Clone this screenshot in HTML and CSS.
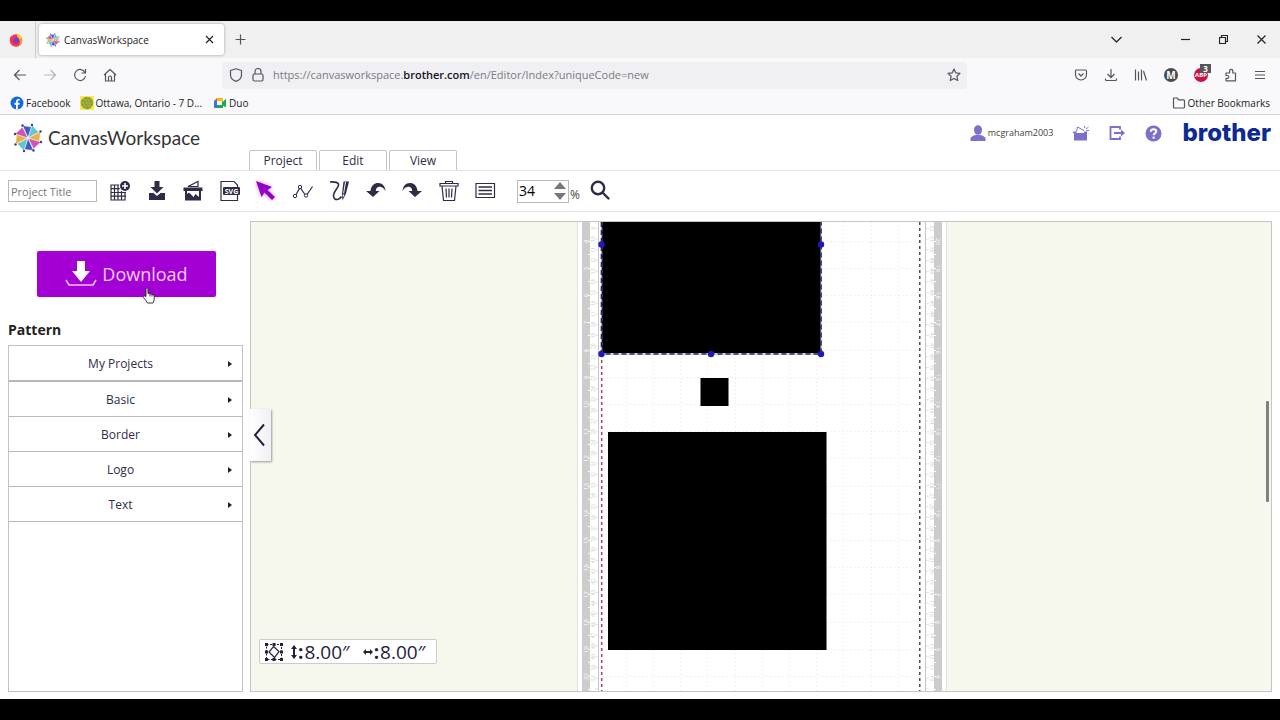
FILE: index.html
```html
<!DOCTYPE html>
<html lang="en">
<head>
    <meta charset="UTF-8">
    <meta name="viewport" content="width=device-width, initial-scale=1.0">
    <title>CanvasWorkspace</title>
    <link rel="stylesheet" href="styles.css">
</head>
<body>
    <!-- shared shapes -->
    <svg class="defs" aria-hidden="true">
        <defs>
            <symbol id="pinwheel" viewBox="-15 -15 30 30">
                <g stroke="#fff" stroke-width=".6">
                    <path fill="#3f5bc9" d="M0 0-5.500-12.500 4-11z"/>
                    <path fill="#62c6d9" d="M0 0 4-13 11-5.500z"/>
                    <path fill="#eab04a" d="M0 0 12.500-6.500 11.500 4z"/>
                    <path fill="#c957b4" d="M0 0 13 4 5.500 11z"/>
                    <path fill="#3f5bc9" d="M0 0 5.500 12.500-4 11.500z"/>
                    <path fill="#62c6c9" d="M0 0-4 13-11 5.500z"/>
                    <path fill="#eab04a" d="M0 0-12.500 6.500-11.500-4z"/>
                    <path fill="#c957b4" d="M0 0-13-4-5.500-11z"/>
                </g>
                <g fill="#3b3f8a">
                    <circle cx="-5.500" cy="-12.500" r="1.200"/><circle cx="4" cy="-13" r="1.200"/><circle cx="12.500" cy="-6.500" r="1.200"/><circle cx="13" cy="4" r="1.200"/>
                    <circle cx="5.500" cy="12.500" r="1.200"/><circle cx="-4" cy="13" r="1.200"/><circle cx="-12.500" cy="6.500" r="1.200"/><circle cx="-13" cy="-4" r="1.200"/>
                </g>
            </symbol>
        </defs>
    </svg>

    <div class="window">
        <div class="tabbar">
            <span class="fox">
                <svg width="14" height="14" viewBox="0 0 14 14"><circle cx="7" cy="7.500" r="6.200" fill="#f5364f"/><path fill="#ff9a1f" d="M8 .6c3.500 1.300 5.400 4 5.200 7.500-.2 2.500-1.800 4.500-4 5.300 1.800-2 2.300-4.500 1.300-6.600C9.800 5 8 4 8 .6z"/><path fill="#ffd23a" d="M8 .6c2.400 1 4 2.700 4.700 4.800L10.500 6C8.600 4.800 7.700 2.700 8 .6z"/><circle cx="7" cy="7.500" r="3" fill="#7a3bd0"/><path fill="#f5364f" d="M1 4.500 3 3l3 1.500L4.500 7H1z"/></svg>
            </span>
            <div class="tab">
                <svg width="14" height="14"><use href="#pinwheel"/></svg>
                <span class="tab-title">CanvasWorkspace</span>
                <button class="icon-btn" aria-label="Close tab"><svg width="9" height="9" viewBox="0 0 9 9"><path d="M1 1l7 7M8 1 1 8"/></svg></button>
            </div>
            <button class="icon-btn new-tab" aria-label="New tab"><svg width="11" height="11" viewBox="0 0 11 11"><path d="M5.500.5v10M.5 5.500h10"/></svg></button>
            <div class="win-buttons">
                <button class="icon-btn list-tabs" aria-label="List tabs"><svg width="11" height="7" viewBox="0 0 11 7"><path d="M.5 1l5 5 5-5"/></svg></button>
                <button class="icon-btn" aria-label="Minimize"><svg width="9" height="9" viewBox="0 0 9 9"><path d="M0 4.500h9"/></svg></button>
                <button class="icon-btn" aria-label="Restore"><svg width="9" height="9" viewBox="0 0 9 9"><path d="M.5 2.500h6v6h-6zM2.500 2.500v-2h6v6h-2"/></svg></button>
                <button class="icon-btn" aria-label="Close"><svg width="9" height="9" viewBox="0 0 9 9"><path d="M.5.5l8 8M8.500.5l-8 8"/></svg></button>
            </div>
        </div>

        <div class="navbar">
            <div class="nav-left">
                <button class="icon-btn" aria-label="Back"><svg width="14" height="14" viewBox="0 0 14 14"><path d="M13 7H1.500M6.500 2l-5 5 5 5"/></svg></button>
                <button class="icon-btn off" aria-label="Forward"><svg width="14" height="14" viewBox="0 0 14 14"><path d="M1 7h11.500M7.500 2l5 5-5 5"/></svg></button>
                <button class="icon-btn" aria-label="Reload"><svg width="14" height="14" viewBox="0 0 14 14"><path d="M12 4.500A5.500 5.500 0 1 0 12.500 8M12.500 1v4h-4"/></svg></button>
                <button class="icon-btn" aria-label="Home"><svg width="14" height="14" viewBox="0 0 14 14"><path d="M1 7l6-5.500L13 7M2.500 6v7h9V6M5.500 13V9.500q0-1.500 1.500-1.500t1.500 1.500V13"/></svg></button>
            </div>
            <div class="urlbar">
                <svg width="14" height="14" viewBox="0 0 14 14"><path d="M7 .8l5.500 1.700v4C12.500 10 9.800 12.500 7 13.300 4.200 12.500 1.500 10 1.500 6.500v-4z"/></svg>
                <svg width="12" height="14" viewBox="0 0 12 14"><rect x="1" y="6" width="10" height="7" rx="1.500"/><path d="M3 6V3.500a3 3 0 0 1 6 0V6"/></svg>
                <div class="url" role="textbox" aria-label="Address" contenteditable="true" spellcheck="false">https://canvasworkspace.<b>brother.com</b>/en/Editor/Index?uniqueCode=new</div>
                <button class="icon-btn" aria-label="Bookmark this page"><svg width="14" height="14" viewBox="0 0 14 14"><path d="M7 1l1.800 3.900 4.200.5-3.100 2.900.8 4.200L7 10.400l-3.700 2.100.8-4.200L1 5.400l4.200-.5z"/></svg></button>
            </div>
            <div class="nav-right">
                <button class="icon-btn" aria-label="Pocket"><svg width="14" height="14" viewBox="0 0 14 14"><path d="M2.500 2h9q1 0 1 1v3.500a5.500 5.500 0 0 1-11 0V3q0-1 1-1zM4.500 5.500 7 8l2.500-2.500"/></svg></button>
                <button class="icon-btn" aria-label="Downloads"><svg width="14" height="14" viewBox="0 0 14 14"><path d="M7 1v8.500M3.500 6 7 9.500 10.500 6M1.500 10.500v1q0 1 1 1h9q1 0 1-1v-1"/></svg></button>
                <button class="icon-btn" aria-label="Library"><svg width="14" height="14" viewBox="0 0 14 14"><path d="M1.500 1.500v11M4.500 3.500v9M7.500 1.500v11M9.500 3l3 9.500"/></svg></button>
                <button class="icon-btn" aria-label="Account"><span class="avatar">M</span></button>
                <button class="icon-btn abp-btn" aria-label="Adblock Plus"><span class="abp">ABP</span><span class="badge">3</span></button>
                <button class="icon-btn" aria-label="Extensions"><svg width="14" height="14" viewBox="0 0 14 14"><path d="M2 12.800h9.500V5H8.800V3a1.600 1.600 0 0 0-3.200 0v2H2v2.500h1.500a1.400 1.400 0 0 1 0 2.800H2z"/></svg></button>
                <button class="icon-btn" aria-label="Menu"><svg width="12" height="12" viewBox="0 0 12 12"><path d="M1 2.500h10M1 6h10M1 9.500h10"/></svg></button>
            </div>
        </div>

        <div class="bookmarks">
            <a href="#"><svg width="14" height="14" viewBox="0 0 14 14"><circle cx="7" cy="7" r="6.500" fill="#1068e0"/><path fill="#fff" d="M6 13.500V8.700H4.300V6.800H6V5.500C6 3.700 7 2.900 8.500 2.900h1.200v1.700h-.9c-.8 0-1 .4-1 1.100v1.100h1.900l-.3 1.900H7.800v4.800z"/></svg>Facebook</a>
            <a href="#"><svg width="14" height="14" viewBox="0 0 14 14"><path fill="#f2ea59" d="M0 0h14v14H0z"/><circle cx="7" cy="7" r="6.200" fill="#8c9c2c"/><path stroke="#b4bc4c" stroke-width=".6" fill="none" d="M2 4h10M1 7h12M2 10h10M4 2l6 10M7 1l4 9M2 5l4 8"/></svg>Ottawa, Ontario - 7 D...</a>
            <a href="#" class="duo"><svg width="14" height="14" viewBox="0 0 14 14"><path fill="#2979ee" d="M1 5h3v4H1z"/><path fill="#e8453c" d="M1 5l3-3v3z"/><path fill="#fbbc04" d="M4 2h6v3H4z"/><path fill="#2979ee" d="M1 9h3v3H2q-1 0-1-1z"/><path fill="#1fa854" d="M4 9h5V7l4-4.500v9L10 9.500V12H4zM9 5h1v4H9z"/></svg>Duo</a>
            <a href="#" class="other"><svg width="14" height="14" viewBox="0 0 14 14" class="line"><path d="M1.500 2h3.700l1.500 1.800h4.800q1 0 1 1V11q0 1-1 1h-9q-1 0-1-1z"/></svg>Other Bookmarks</a>
        </div>

        <header class="header">
            <a href="#" class="brand">
                <svg width="30" height="30"><use href="#pinwheel"/></svg>
                <span>CanvasWorkspace</span>
            </a>
            <nav class="menu">
                <button>Project</button>
                <button>Edit</button>
                <button>View</button>
            </nav>
            <div class="account">
                <a href="#" class="user"><svg width="16" height="16" viewBox="0 0 16 16"><ellipse cx="8" cy="5" rx="4" ry="4.800"/><path d="M.5 16v-2.500Q1 11 6 10h4q5 1 5.500 3.500V16z"/></svg>mcgraham2003</a>
                <a href="#" aria-label="News"><svg width="16" height="16" viewBox="0 0 16 16"><path d="M1 8h13v7.500H1zM0 6.500h3.500V8H0zM11 6.500h3V8h-3z"/><path fill="none" stroke="#7c70cb" d="M3.500 6.500 4.500 2l6.500 3.500M11.500 3l.5-2M13 4l2.500-2M13.500 5.500H16"/></svg></a>
                <a href="#" aria-label="Log out"><svg width="16" height="16" viewBox="0 0 16 16"><path fill="none" stroke="#7c70cb" stroke-width="1.800" d="M11 4.500V2H1.500v12H11v-2.500M5 8h9"/><path d="M12 4.500 16 8l-4 3.500z"/></svg></a>
                <a href="#" aria-label="Help"><svg width="17" height="17" viewBox="0 0 17 17"><circle cx="8.500" cy="8.500" r="8"/><path fill="none" stroke="#fff" stroke-width="2" d="M5.800 6.800q0-2.600 2.700-2.600t2.700 2.200c0 1.700-2.500 1.800-2.500 3.800"/><circle cx="8.700" cy="12.600" r="1.200" fill="#fff"/></svg></a>
                <span class="brother">brother</span>
            </div>
        </header>

        <div class="toolbar">
            <input class="title-input" type="text" placeholder="Project Title" aria-label="Project Title">
            <div class="tools">
                <button aria-label="New"><svg width="24" height="24" viewBox="0 0 24 24"><path class="s" d="M3 6h14v15H3zM3 9.700h15M3 13.500h15M3 17.200h15M6.500 6v15M10 6v15M13.500 6v15"/><circle cx="17" cy="7" r="6" fill="#fff"/><circle cx="17" cy="7" r="5"/><path stroke="#fff" stroke-width="1.600" d="M17 4v6M14 7h6"/></svg></button>
                <button aria-label="Save"><svg width="24" height="24" viewBox="0 0 24 24"><path d="M9.500 2h5v6h4L12 14.500 5.500 8h4zM4 14h4.500l3.500 3 3.500-3H20v7H4z"/></svg></button>
                <button aria-label="Image"><svg width="24" height="24" viewBox="0 0 24 24"><path d="M2.500 8.500h19V12H20v9.500H4V12H2.500z"/><path fill="#fff" d="M6 12h12v6l-3.500-3-2 3L8 13.500 6 15z"/><path class="s" d="M7 7.500l10-5v5z"/></svg></button>
                <button aria-label="SVG"><svg width="24" height="24" viewBox="0 0 24 24"><path class="s" d="M3 2.500h13l3.500 3.500v15.500H3z"/><rect x="5" y="8" width="17" height="8" rx="1"/><text x="13.500" y="14.500">SVG</text></svg></button>
                <button aria-label="Select" class="active"><svg width="24" height="24" viewBox="0 0 24 24"><path d="M2 2l16 6-4.500 3 7.500 7-3 3-7.500-7.500-3 4.500z"/></svg></button>
                <button aria-label="Edit points"><svg width="24" height="24" viewBox="0 0 24 24"><path class="s" d="M4 17.500 9 8.500l6 8.500 6.500-9.500"/><g fill="#fff" stroke="#2d2d48"><circle cx="4" cy="17" r="1.700"/><circle cx="9" cy="8" r="1.700"/><circle cx="15" cy="16.500" r="1.700"/></g></svg></button>
                <button aria-label="Draw"><svg width="24" height="24" viewBox="0 0 24 24"><path class="s w" d="M3 3q7-.5 8.500 2C12.500 8 6 12.500 6.500 17q.5 4 4 3.500 2.500-.3 4-3"/><path d="M16.500 2.500h5.500l-3 12-3.500 7-.5-7z"/><path fill="#fff" d="M18 3h1l-2 11.500-.8-.3zM15.800 15.500h1.700l-1.500 3z"/></svg></button>
                <button aria-label="Undo"><svg width="24" height="24" viewBox="0 0 24 24"><path d="M2 12h4.500C7 6.500 10.500 4 14 4c4.500 0 7 3 7.500 8-2-3.500-4-4.500-6.500-4.300-2 .2-3 1.600-3.200 4.300h3.700l-6.500 6z"/></svg></button>
                <button aria-label="Redo"><svg width="24" height="24" viewBox="0 0 24 24"><path d="M22 12h-4.500C17 6.500 13.500 4 10 4c-4.500 0-7 3-7.500 8 2-3.500 4-4.500 6.500-4.300 2 .2 3 1.600 3.200 4.300H8.500l6.500 6z"/></svg></button>
                <button aria-label="Delete"><svg width="24" height="24" viewBox="0 0 24 24"><path class="s" d="M3 4.500h18v2.500H3zM8.500 4.500v-2h7v2M5 7l1.500 14.500h11L19 7M9 9.500l.5 9M12 9.500v9M15 9.500l-.5 9"/></svg></button>
                <button aria-label="Properties"><svg width="24" height="24" viewBox="0 0 24 24"><path class="s" d="M3 4.500h18.500v14H3z"/><path class="s w" d="M5.500 8h13.500M5.500 11.500h13.500M5.500 15h13.500"/></svg></button>
            </div>
            <div class="zoom">
                <div class="zoom-box">
                    <input id="zoom" type="number" value="34">
                    <div class="steps">
                        <button aria-label="Zoom in"><svg width="12" height="7" viewBox="0 0 12 7"><path d="M6 0l6 7H0z"/></svg></button>
                        <button aria-label="Zoom out"><svg width="12" height="7" viewBox="0 0 12 7"><path d="M0 0h12L6 7z"/></svg></button>
                    </div>
                </div>
                <label for="zoom">%</label>
            </div>
            <button class="search" aria-label="Zoom"><svg width="22" height="22" viewBox="0 0 22 22"><circle cx="9" cy="8" r="6.200"/><path d="M13.500 12.500l6 6"/></svg></button>
        </div>

        <main class="main">
            <aside class="side">
                <button class="download">
                    <svg width="32" height="28" viewBox="0 0 32 28"><path fill="#fff" d="M12 1h8v10h5l-9 11-9-11h5z"/><path fill="none" stroke="#f3c0ff" stroke-width="1.600" d="M1 20l3 5h24l3-5"/></svg>
                    <span>Download</span>
                    <svg class="hand" width="14" height="17" viewBox="0 0 14 17"><path fill="#fff" stroke="#222" stroke-width=".9" d="M4 9.500V2q0-1.200 1-1.200T6 2v4.500q1.700-.7 2 .5 1.500-.6 2 .5 2.200-.4 2.200 1.500v3q0 2-1.200 4H5.500Q4 13.500 1.500 10.500q-.8-1.200.4-1.600Q3 8.700 4 9.500zM8 7v2.500M10 7.500v2"/></svg>
                </button>
                <h2>Pattern</h2>
                <div class="patterns">
                    <button><span>My Projects</span><i></i></button>
                    <button><span>Basic</span><i></i></button>
                    <button><span>Border</span><i></i></button>
                    <button><span>Logo</span><i></i></button>
                    <button><span>Text</span><i></i></button>
                </div>
            </aside>

            <section class="canvas">
                <svg class="mat" id="mat" width="372">
                    <rect x="2" width="370" height="100%" fill="#fff"/>
                    <rect x="2" width="1" height="100%" fill="#e0e2d8"/>
                    <rect x="7" width="8" height="100%" fill="#ccc"/>
                    <rect x="359" width="8" height="100%" fill="#ccc"/>
                    <rect x="371" width="1" height="100%" fill="#e0e2d8"/>
                    <rect x="23" width="1" height="100%" fill="#c4c4c4"/>
                    <rect x="350" width="1" height="100%" fill="#c4c4c4"/>
                    <g id="grid"></g>
                    <path stroke="#333" stroke-width="1.300" stroke-dasharray="3 3" d="M344.800 0v1200"/>
                    <rect x="27" y="-90" width="219" height="221"/>
                    <rect x="125.500" y="156" width="28" height="28"/>
                    <rect x="33" y="210" width="218.500" height="218"/>
                    <path stroke="#b04055" stroke-width="1.500" stroke-dasharray="3 3" d="M26.700 0v1200"/>
                    <path class="sel-back" d="M26.500 0v132h219.500V0"/>
                    <path class="sel" d="M26.500 0v132h219.500V0"/>
                    <g fill="#2317b5">
                        <circle cx="26.500" cy="22.500" r="3.200"/><circle cx="246" cy="22.500" r="3.200"/>
                        <circle cx="26.500" cy="132" r="3.200"/><circle cx="136" cy="132" r="3.200"/><circle cx="246" cy="132" r="3.200"/>
                    </g>
                </svg>
                <button class="collapse" aria-label="Hide panel"><svg width="12" height="24" viewBox="0 0 12 24"><path d="M11 1.500 2 12l9 10.500"/></svg></button>
                <div class="size">
                    <svg width="20" height="20" viewBox="0 0 20 20"><path fill="none" stroke="#22223a" stroke-dasharray="2 1.500" d="M2.500 2.500h15v15h-15z"/><path fill="#fff" stroke="#22223a" stroke-width="1.200" d="M9.500 4.500l5.500 5-4.500 6L5 10z"/><path d="M1 1h3v3H1zM8.500 1h3v3h-3zM16 1h3v3h-3zM1 8.500h3v3H1zM16 8.500h3v3h-3zM1 16h3v3H1zM8.500 16h3v3h-3zM16 16h3v3h-3z"/></svg>
                    <span><svg width="6" height="14" viewBox="0 0 6 14"><path d="M3 0l3 4H4v6h2l-3 4-3-4h2V4H0z"/></svg><b>:</b>8.00″</span>
                    <span><svg width="10" height="6" viewBox="0 0 10 6"><path d="M0 3l3-3v2h4V0l3 3-3 3V4H3v2z"/></svg><b>:</b>8.00″</span>
                </div>
                <div class="scroll"></div>
            </section>
        </main>
    </div>

    <script src="mat.js"></script>
</body>
</html>
```
FILE: styles.css
```css
* {
    box-sizing: border-box;
    margin: 0;
    padding: 0;
}
body {
    min-height: 100vh;
    padding: 21px 0;
    display: flex;
    background-color: #000;
    font: 12px/16px "Open Sans", "Noto Sans", sans-serif;
    color: #222;
}
button, input {
    font: inherit;
    color: inherit;
    border: none;
    background: none;
}
a {
    color: inherit;
    text-decoration: none;
}
svg {
    flex: none;
}
.defs {
    position: absolute;
    width: 0;
    height: 0;
}
.window {
    flex: 1;
    min-width: 0;
    display: flex;
    flex-direction: column;
    background-color: #fff;
}

/* browser */
.icon-btn {
    display: flex;
    align-items: center;
    justify-content: center;
}
.icon-btn svg, .urlbar svg, .line {
    fill: none;
    stroke: #55555e;
    stroke-width: 1.2;
    stroke-linejoin: round;
}
.tabbar {
    height: 37px;
    display: flex;
    align-items: center;
    background-color: #f0f0f0;
}
.fox {
    width: 36px;
    height: 37px;
    padding-left: 9px;
    display: flex;
    align-items: center;
    border-right: 1px solid #ccc;
}
.tab {
    width: 185px;
    height: 31px;
    margin-left: 3px;
    padding: 0 10px 0 7px;
    display: flex;
    align-items: center;
    gap: 4px;
    border-radius: 3px;
    background-color: #fff;
    box-shadow: 0 0 3px #999;
    font-size: 10px;
}
.tab-title {
    flex: 1;
}
.tab .icon-btn svg, .win-buttons .icon-btn svg {
    stroke: #222;
}
.new-tab {
    margin-left: 11px;
}
.win-buttons {
    margin-left: auto;
    padding-right: 14px;
    display: flex;
    gap: 29px;
}
.win-buttons .list-tabs {
    margin-right: 30px;
}
.navbar {
    height: 34px;
    display: flex;
    align-items: center;
    background-color: #f9f9fb;
}
.nav-left {
    width: 222px;
    padding-left: 13px;
    display: flex;
    gap: 16px;
}
.off {
    opacity: .4;
}
.urlbar {
    flex: 1;
    max-width: 745px;
    height: 27px;
    padding: 0 6px 0 7px;
    display: flex;
    align-items: center;
    gap: 9px;
    border-radius: 3px;
    background-color: #f0f0f4;
}
.url {
    flex: 1;
    white-space: nowrap;
    overflow: hidden;
    font-size: 11px;
    color: #7a7a82;
}
.url b {
    font-weight: 600;
    color: #15141a;
}
.nav-right {
    margin-left: auto;
    padding-right: 14px;
    display: flex;
    align-items: center;
    gap: 16px;
}
.avatar, .abp {
    width: 14px;
    height: 14px;
    border-radius: 50%;
    background-color: #4a4a50;
    color: #fff;
    font: bold 10px/14px "Open Sans", sans-serif;
    text-align: center;
}
.abp {
    background-color: #d1103f;
    font-size: 6px;
}
.abp-btn {
    position: relative;
}
.badge {
    position: absolute;
    top: -4px;
    right: -3px;
    width: 11px;
    height: 9px;
    background-color: #55555a;
    color: #fff;
    font: bold 8px/9px "Open Sans", sans-serif;
}
.bookmarks {
    height: 23px;
    padding: 0 10px;
    display: flex;
    align-items: center;
    gap: 9px;
    border-bottom: 1px solid #d0d0d8;
    background-color: #f9f9fb;
    font-size: 10px;
}
.bookmarks a {
    display: flex;
    align-items: center;
    gap: 2px;
}
.bookmarks .duo {
    margin-left: 2px;
}
.bookmarks .other {
    margin-left: auto;
}

/* app header */
.header {
    height: 56px;
    display: flex;
    border-bottom: 1px solid #e2e2e6;
}
.brand {
    width: 249px;
    height: 46px;
    padding-left: 13px;
    display: flex;
    align-items: center;
    gap: 5px;
    font: 19px/24px Lato, sans-serif;
    color: #333;
}
.menu {
    display: flex;
    align-items: flex-end;
    gap: 2px;
}
.menu button {
    width: 68px;
    height: 20px;
    border: 1px solid #c4c4c8;
    border-bottom: none;
    border-radius: 2px 2px 0 0;
    color: #2d2d48;
}
.account {
    height: 36px;
    margin-left: auto;
    padding-right: 9px;
    display: flex;
    align-items: center;
    gap: 20px;
    fill: #7c70cb;
}
.account a {
    display: flex;
}
.account .user {
    align-items: center;
    gap: 2px;
    font-size: 9px;
    color: #444;
}
.brother {
    font: 800 24px/30px Inter, sans-serif;
    color: #0d2a92;
}

/* tools */
.toolbar {
    height: 41px;
    padding-left: 8px;
    display: flex;
    align-items: center;
    border-bottom: 1px solid #e2e2e6;
}
.title-input {
    width: 89px;
    height: 22px;
    padding-left: 2px;
    border: 1px solid #b8b8b8;
    font-size: 11px;
}
.title-input::placeholder {
    color: #777;
}
.tools {
    width: 389px;
    margin-left: 11px;
    display: flex;
    justify-content: space-between;
}
.tools button {
    width: 24px;
    height: 24px;
    fill: #2d2d48;
}
.tools .s {
    fill: none;
    stroke: #2d2d48;
    stroke-width: 1.2;
}
.tools .w {
    stroke-width: 1.6;
}
.tools text {
    font: bold 7px "Open Sans", sans-serif;
    fill: #fff;
    text-anchor: middle;
}
.tools .active {
    fill: #9400c8;
    filter: drop-shadow(0 0 2px #d58cf0);
}
.zoom {
    margin-left: 20px;
    display: flex;
    align-items: flex-end;
    gap: 1px;
    color: #444;
}
.zoom label {
    height: 16px;
}
.zoom-box {
    width: 52px;
    height: 23px;
    padding-right: 2px;
    display: flex;
    align-items: center;
    border: 1px solid #b8b8b8;
}
.zoom-box input {
    flex: 1;
    min-width: 0;
    padding-left: 1px;
    appearance: textfield;
    font-size: 14px;
    color: #000;
}
.zoom-box input::-webkit-inner-spin-button {
    display: none;
}
.steps {
    display: flex;
    flex-direction: column;
    gap: 4px;
    fill: #777;
}
.steps button {
    display: flex;
}
.search {
    margin-left: 9px;
    display: flex;
    fill: none;
    stroke: #2d2d48;
    stroke-width: 2.4;
    stroke-linecap: round;
}

/* workspace */
.main {
    flex: 1;
    padding: 9px 8px 7px;
    display: flex;
    gap: 7px;
}
.side {
    width: 235px;
    display: flex;
    flex-direction: column;
}
.download {
    position: relative;
    width: 179px;
    height: 46px;
    margin: 30px auto 0 29px;
    display: flex;
    align-items: center;
    justify-content: center;
    gap: 5px;
    border-radius: 2px;
    background-color: #a300d6;
    color: #f6d0ff;
    font-size: 18px;
}
.hand {
    position: absolute;
    left: 105px;
    top: 36px;
}
.side h2 {
    margin: 25px 0 7px;
    font-size: 14px;
    line-height: 16px;
}
.patterns {
    flex: 1;
    display: flex;
    flex-direction: column;
    border: 1px solid #c2c2c6;
}
.patterns button {
    height: 35px;
    padding: 2px 10px 0 4px;
    display: flex;
    align-items: center;
    border-bottom: 1px solid #b8b8bc;
    color: #2d2d48;
}
.patterns button:first-child {
    height: 36px;
    border-bottom-width: 2px;
}
.patterns span {
    flex: 1;
}
.patterns i {
    border: 3px solid transparent;
    border-left: 4px solid #222;
    border-right: none;
}
.canvas {
    position: relative;
    flex: 1;
    min-width: 0;
    display: flex;
    justify-content: center;
    border: 1px solid #c4c6c0;
    background-color: #f6f8ee;
}
.mat {
    overflow: hidden;
}
.grid-line {
    stroke: #e4e4e4;
    stroke-dasharray: 1 3;
}
.tick {
    stroke: #fff;
}
.cm-tick {
    stroke: #e4e4e4;
}
.inch, .cm {
    font: 6px "Open Sans", sans-serif;
    text-anchor: middle;
    fill: #fff;
}
.cm {
    font-size: 5px;
    fill: #ccc;
}
.sel-back, .sel {
    fill: none;
    stroke: #aaa;
    stroke-width: 1.2;
}
.sel {
    stroke: #2b2478;
    stroke-width: 1.6;
    stroke-dasharray: 5 3;
}
.collapse {
    position: absolute;
    left: -1px;
    top: 187px;
    width: 21px;
    height: 52px;
    padding-right: 3px;
    display: flex;
    align-items: center;
    justify-content: center;
    background: linear-gradient(to right, #fff, #f0f0f4);
    box-shadow: 1px 1px 2px #999;
    fill: none;
    stroke: #22223a;
    stroke-width: 2;
}
.size {
    position: absolute;
    left: 8px;
    bottom: 27px;
    width: 178px;
    height: 25px;
    padding-left: 4px;
    display: flex;
    align-items: center;
    gap: 7px;
    border: 1px solid #ccc;
    border-radius: 2px;
    background-color: #fff;
    fill: #22223a;
    color: #22223a;
    font-size: 19px;
}
.size span {
    display: flex;
    align-items: center;
    gap: 1px;
    margin-right: 6px;
}
.scroll {
    position: absolute;
    right: 2px;
    top: 179px;
    width: 3px;
    height: 101px;
    border-radius: 1px;
    background-color: #808080;
}
```
FILE: mat.js
```javascript
// draws the cutting mat grid and the rulers on both sides
var grid = document.getElementById("grid");
var matHeight = document.getElementById("mat").getBoundingClientRect().height;
var INCH = 27.2;
var CM = INCH / 2.54;
var LEFT = 23.5;
var TOP = -90;       // where the 0 of the left ruler is
var html = "";

function line(cls, x1, y1, x2, y2) {
    html += "<line class='" + cls + "' x1='" + x1 + "' y1='" + y1 + "' x2='" + x2 + "' y2='" + y2 + "'/>";
}
function label(cls, x, y, angle, text) {
    // only whole numbers, none cut by the edge of the mat
    if (y > 5 && y < matHeight - 5) {
        html += "<text class='" + cls + "' transform='translate(" + x + " " + y + ") rotate(" + angle + ")'>" + text + "</text>";
    }
}

for (var i = 1; i < 12; i++) {
    var x = Math.round(LEFT + i * INCH) + 0.5;
    line("grid-line", x, 0, x, 1200);
}
for (var n = 4; n < 24; n++) {
    var y = Math.round(TOP + n * INCH) + 0.5;
    line("grid-line", LEFT, y, LEFT + 12 * INCH, y);
    line("tick", 13, y, 15, y);
    line("tick", 359, y, 361, y);
    line("tick", 13, y + 13, 15, y + 13);
    line("tick", 359, y + 13, 361, y + 13);
    label("inch", 13, y, -90, n);
    label("inch", 361, y, 90, 24 - n);
}
for (var c = 9; c < 60; c++) {
    var cy = TOP + c * CM;
    line("cm-tick", 20, cy, 23, cy);
    line("cm-tick", 351, cy, 354, cy);
    label("cm", 20, cy, -90, c);
    label("cm", 355, cy, 90, 61 - c);
}
grid.innerHTML = html;
```
